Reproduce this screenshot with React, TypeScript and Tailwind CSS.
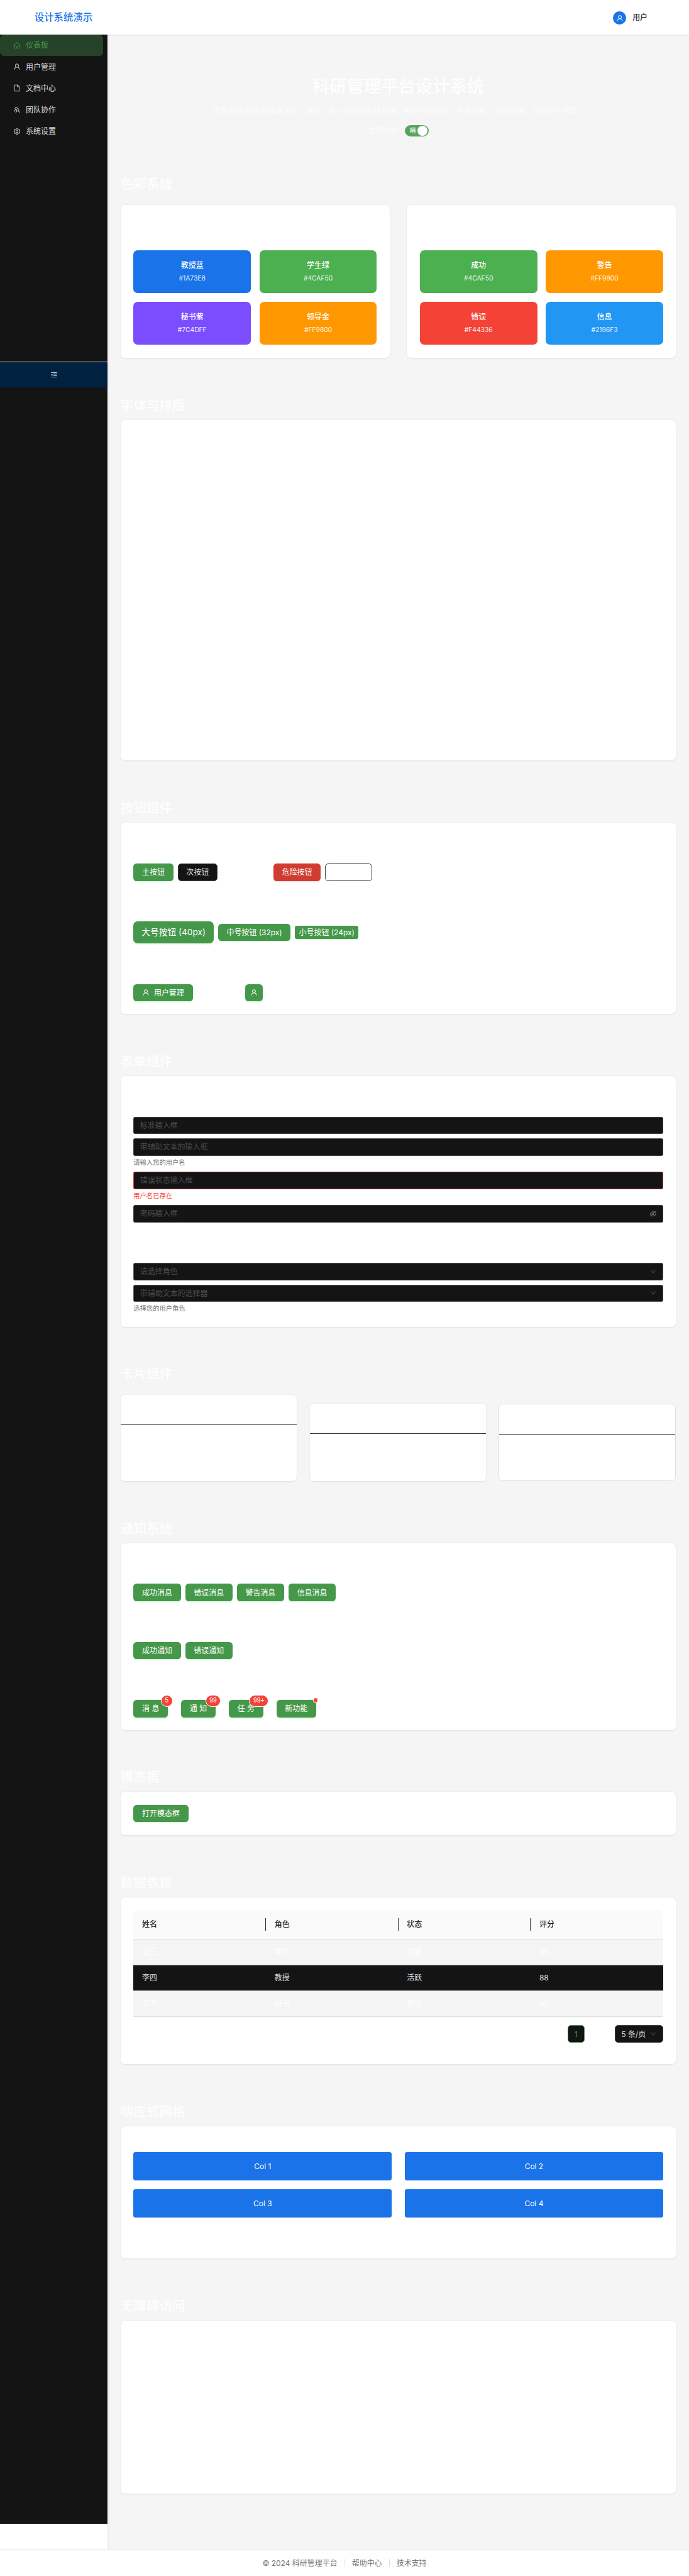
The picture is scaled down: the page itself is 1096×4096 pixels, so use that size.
import type { ReactNode } from "react";
import {
  AiOutlineHome,
  AiOutlineUser,
  AiOutlineFile,
  AiOutlineTeam,
  AiOutlineSetting,
  AiOutlineMenuFold,
  AiOutlineEyeInvisible,
  AiOutlineDown,
} from "react-icons/ai";

const menu = [
  { label: "仪表板", icon: AiOutlineHome, active: true },
  { label: "用户管理", icon: AiOutlineUser },
  { label: "文档中心", icon: AiOutlineFile },
  { label: "团队协作", icon: AiOutlineTeam },
  { label: "系统设置", icon: AiOutlineSetting },
];

const roleColors = [
  { name: "教授蓝", hex: "#1A73E8", bg: "bg-[#1a73e8]" },
  { name: "学生绿", hex: "#4CAF50", bg: "bg-[#4caf50]" },
  { name: "秘书紫", hex: "#7C4DFF", bg: "bg-[#7c4dff]" },
  { name: "领导金", hex: "#FF9800", bg: "bg-[#ff9800]" },
];

const stateColors = [
  { name: "成功", hex: "#4CAF50", bg: "bg-[#4caf50]" },
  { name: "警告", hex: "#FF9800", bg: "bg-[#ff9800]" },
  { name: "错误", hex: "#F44336", bg: "bg-[#f44336]" },
  { name: "信息", hex: "#2196F3", bg: "bg-[#2196f3]" },
];

const rows = [
  ["张三", "学生", "活跃", "95"],
  ["李四", "教授", "活跃", "88"],
  ["王五", "秘书", "离线", "92"],
];

function Section({ title, children, gap = "mb-[11.4px]" }: { title: string; children: ReactNode; gap?: string }) {
  return (
    <section className="pt-[72px]">
      <h2 className={`text-2xl leading-8 font-medium text-white/85 ${gap}`}>{title}</h2>
      {children}
    </section>
  );
}

function Card({ className = "", children }: { className?: string; children?: ReactNode }) {
  return <div className={`rounded-lg bg-white shadow-[0_1px_3px_rgba(0,0,0,0.09)] ${className}`}>{children}</div>;
}

function Swatches({ items }: { items: typeof roleColors }) {
  return (
    <Card className="grid h-[284px] flex-1 grid-cols-2 content-start gap-4 px-6 pt-[84px]">
      {items.map((c) => (
        <div key={c.name} className={`flex h-20 flex-col items-center rounded-lg pt-[18px] text-white ${c.bg}`}>
          <span className="text-sm leading-[22px] font-medium">{c.name}</span>
          <span className="mt-px text-xs leading-[22px] opacity-90">{c.hex}</span>
        </div>
      ))}
    </Card>
  );
}

function Button({ children, className = "" }: { children: ReactNode; className?: string }) {
  return (
    <button
      className={`flex h-8 shrink-0 items-center justify-center rounded-md bg-[#459849] text-sm whitespace-nowrap text-white shadow-[0_2px_0_#dcfadf] ${className}`}
    >
      {children}
    </button>
  );
}

function Field({ text, error = false, icon, soft = false }: { text: string; error?: boolean; icon?: ReactNode; soft?: boolean }) {
  return (
    <div
      className={`flex h-8 items-center justify-between rounded-[3px] border bg-[#141414] px-[11px] text-sm text-[#4c4c4c] ${
        error ? "border-[#d13c31]" : soft ? "border-[#5a5a5a]" : "border-[#424242]"
      }`}
    >
      <span>{text}</span>
      {icon}
    </div>
  );
}

function Badge({ text, width }: { text: string; width: string }) {
  return (
    <span
      className={`absolute -top-[10px] flex h-[22px] items-center justify-center rounded-full border border-white bg-[#f44336] font-['Liberation_Sans'] text-xs text-white ${width}`}
    >
      {text}
    </span>
  );
}

export default function App() {
  return (
    <div className="h-[4784px] w-[1280px] overflow-hidden bg-white font-['Inter','Noto_Sans_CJK_SC',sans-serif] text-sm [zoom:0.85625]">
      <div className="flex h-[4783px] flex-col">
        <header className="relative z-10 flex h-16 shrink-0 items-center justify-between bg-white pr-[77px] pl-16 shadow-[0_1px_4px_rgba(0,0,0,0.15)]">
          <span className="text-lg leading-none font-medium text-[#1a73e8]">设计系统演示</span>
          <div className="flex items-center gap-3">
            <span className="mt-[3px] flex size-6 items-center justify-center rounded-full bg-[#1a73e8] text-sm text-white">
              <AiOutlineUser />
            </span>
            <span className="font-medium text-[#212121]">用户</span>
          </div>
        </header>

        <div className="flex h-[4671px] shrink-0">
          <aside className="relative z-10 flex w-[200px] shrink-0 flex-col bg-white shadow-[1px_0_3px_rgba(0,0,0,0.08)]">
            <div className="h-[4623px] border-r border-[#303030] bg-[#141414]">
              <nav className="h-[608px]">
                {menu.map(({ label, icon: Icon, active }) => (
                  <a
                    key={label}
                    className={`flex h-10 w-[191px] items-center gap-[10px] rounded-lg pl-6 ${
                      active ? "bg-[#264228] text-[#459849]" : "text-white/85"
                    }`}
                  >
                    <Icon className="size-[14px]" />
                    <span>{label}</span>
                  </a>
                ))}
              </nav>
              <div className="-mr-px flex h-12 items-center justify-center border-t border-[#e0e0e0] bg-[#002140] text-white">
                <AiOutlineMenuFold className="size-[14px]" />
              </div>
            </div>
          </aside>

          <main className="flex-1 bg-[#f5f5f5] px-6 pt-[76px]">
            <h1 className="text-center text-[32px] leading-10 font-medium text-white/85">科研管理平台设计系统</h1>
            <p className="mt-4 text-center leading-[22px] text-white/65">
              这是故事 000 的实现演示，展示了统一的设计系统基础，包括色彩规范、字体系统、间距网格、基础组件库等。
            </p>
            <div className="mt-[14px] flex h-[22px] items-center justify-center gap-2">
              <span className="text-white/65">主题切换:</span>
              <span className="flex h-[22px] w-11 items-center justify-between rounded-full bg-[#5aa35d] pr-0.5 pl-[9px] text-xs text-white">
                暗
                <span className="size-[18px] rounded-full bg-white" />
              </span>
            </div>

            <Section title="色彩系统" gap="mb-[22.6px]">
              <div className="flex gap-8">
                <Swatches items={roleColors} />
                <Swatches items={stateColors} />
              </div>
            </Section>

            <Section title="字体与排版">
              <Card className="h-[632.4px]" />
            </Section>

            <Section title="按钮组件">
              <Card className="h-[355.4px] px-6 pt-[76px]">
                <div className="flex gap-2">
                  <Button className="w-[74px]">主按钮</Button>
                  <Button className="w-[74px] border border-[#424242] !bg-[#141414] !text-white/85 !shadow-none">次按钮</Button>
                  <Button className="ml-24 w-[88px] !bg-[#d13c31] !shadow-[0_2px_0_#fbe3e4]">危险按钮</Button>
                  <span className="h-8 w-[88px] rounded-md border border-[#424242]" />
                </div>
                <div className="mt-[75.6px] flex items-center gap-2">
                  <Button className="!h-10 w-[149px] !rounded-lg !text-base">大号按钮 (40px)</Button>
                  <Button className="w-[135px]">中号按钮 (32px)</Button>
                  <Button className="!h-6 w-[118px] !rounded">小号按钮 (24px)</Button>
                </div>
                <div className="mt-[76px] flex">
                  <Button className="w-[110px] gap-2">
                    <AiOutlineUser className="size-[14px]" />
                    用户管理
                  </Button>
                  <Button className="ml-[98px] w-8">
                    <AiOutlineUser className="size-[14px]" />
                  </Button>
                </div>
              </Card>
            </Section>

            <Section title="表单组件">
              <Card className="h-[465.2px] px-6 pt-[75.6px]">
                <div className="flex flex-col">
                  <Field text="标准输入框" />
                  <div className="mt-2">
                    <Field text="带辅助文本的输入框" />
                    <p className="mt-1 text-xs leading-[18px] text-[#757575]">请输入您的用户名</p>
                  </div>
                  <div className="mt-2">
                    <Field text="错误状态输入框" error />
                    <p className="mt-1 text-xs leading-[18px] text-[#f44336]">用户名已存在</p>
                  </div>
                  <div className="mt-2">
                    <Field text="密码输入框" icon={<AiOutlineEyeInvisible className="size-[14px] text-[#8c8c8c]" />} />
                  </div>
                  <div className="mt-[75.5px]">
                    <Field text="请选择角色" soft icon={<AiOutlineDown className="size-3 text-[#5a5a5a]" />} />
                  </div>
                  <div className="mt-2">
                    <Field text="带辅助文本的选择器" soft icon={<AiOutlineDown className="size-3 text-[#5a5a5a]" />} />
                    <p className="mt-1 text-xs leading-[18px] text-[#757575]">选择您的用户角色</p>
                  </div>
                </div>
              </Card>
            </Section>

            <Section title="卡片组件" gap="mb-[23.2px]">
              <div className="flex items-end gap-6">
                <Card className="h-[159.4px] flex-1">
                  <div className="h-14 border-b border-[#303030]" />
                </Card>
                <Card className="h-[143px] flex-1">
                  <div className="h-14 border-b border-[#303030]" />
                </Card>
                <Card className="h-[143px] flex-1 border border-[#dddddd] !shadow-none">
                  <div className="h-14 border-b border-[#303030]" />
                </Card>
              </div>
            </Section>

            <Section title="通知系统">
              <Card className="h-[346.8px] px-6 pt-[75.6px]">
                <div className="flex gap-2">
                  <Button className="w-[88px]">成功消息</Button>
                  <Button className="w-[88px]">错误消息</Button>
                  <Button className="w-[88px]">警告消息</Button>
                  <Button className="w-[88px]">信息消息</Button>
                </div>
                <div className="mt-[75.8px] flex gap-2">
                  <Button className="w-[88px]">成功通知</Button>
                  <Button className="w-[88px]">错误通知</Button>
                </div>
                <div className="mt-[76.2px] flex gap-[24.5px]">
                  <span className="relative">
                    <Button className="w-16">消 息</Button>
                    <Badge text="5" width="left-[51px] w-[22px]" />
                  </span>
                  <span className="relative">
                    <Button className="w-16">通 知</Button>
                    <Badge text="99" width="left-[45px] w-[29px]" />
                  </span>
                  <span className="relative">
                    <Button className="w-16">任 务</Button>
                    <Badge text="99+" width="left-[38px] w-[36px]" />
                  </span>
                  <span className="relative">
                    <Button className="w-[74px]">新功能</Button>
                    <span className="absolute -top-[5px] -right-1 size-[10px] rounded-full border border-white bg-[#f44336]" />
                  </span>
                </div>
              </Card>
            </Section>

            <Section title="模态框">
              <Card className="h-20 p-6">
                <Button className="w-[102px]">打开模态框</Button>
              </Card>
            </Section>

            <Section title="数据表格">
              <Card className="h-[310.2px] px-6 pt-6">
                <div className="grid h-[54px] grid-cols-4 items-center rounded-t-lg border-b border-[#e0e0e0] bg-[#fafafa] font-medium text-[#212121]">
                  {["姓名", "角色", "状态", "评分"].map((h, i) => (
                    <div
                      key={h}
                      className={`flex h-[23px] items-center pl-4 ${i < 3 ? "border-r border-[#303030]" : ""}`}
                    >
                      {h}
                    </div>
                  ))}
                </div>
                {rows.map((r, i) => (
                  <div
                    key={r[0]}
                    className={`grid h-12 grid-cols-4 items-center border-b border-[#e0e0e0] text-white/85 ${
                      i === 1 ? "bg-[#141414]" : "bg-[#f5f5f5]"
                    }`}
                  >
                    {r.map((cell) => (
                      <span key={cell} className="pl-4">
                        {cell}
                      </span>
                    ))}
                  </div>
                ))}
                <div className="mt-4 flex justify-end">
                  <span className="flex size-8 items-center justify-center rounded-md border border-[#459849] bg-[#141414] text-[#459849]">1</span>
                  <span className="ml-14 flex h-8 w-[90px] items-center justify-between rounded-md border border-[#424242] bg-[#141414] px-[11px] whitespace-nowrap text-white/85">
                    5 条/页
                    <AiOutlineDown className="size-3 text-[#5a5a5a]" />
                  </span>
                </div>
              </Card>
            </Section>

            <Section title="响应式网格">
              <Card className="grid h-[245px] grid-cols-2 content-start gap-x-6 gap-y-4 px-6 pt-[47.8px]">
                {[1, 2, 3, 4].map((n) => (
                  <div key={n} className="flex h-[53px] items-center justify-center rounded bg-[#1a73e8] text-white">
                    Col {n}
                  </div>
                ))}
              </Card>
            </Section>

            <Section title="无障碍访问">
              <Card className="h-[322px]" />
            </Section>
          </main>
        </div>

        <footer className="flex h-12 items-center justify-center border-t border-[#e0e0e0] bg-white text-[#757575]">
          <span>© 2024 科研管理平台</span>
          <span className="mx-[13px] h-[14px] w-px bg-[#e0e0e0]" />
          <span>帮助中心</span>
          <span className="mx-[13px] h-[14px] w-px bg-[#e0e0e0]" />
          <span>技术支持</span>
        </footer>
      </div>
    </div>
  );
}
